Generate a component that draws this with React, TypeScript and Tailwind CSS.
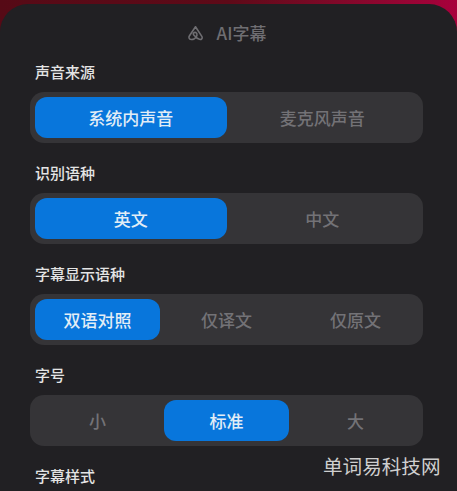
const font = { fontFamily: '"Noto Sans CJK SC", "Noto Sans", sans-serif' };

interface SegmentProps {
  label: string;
  options: string[];
  active: number;
}

function Segment({ label, options, active }: SegmentProps) {
  return (
    <div>
      <p className="mb-[9px] pl-[5px] text-[15px] leading-[22px] font-medium text-[#e4e4e4]">
        {label}
      </p>
      <div
        className={`flex h-[51px] items-center rounded-[14px] bg-[#353437] px-[5px] ${
          options.length === 3 ? "gap-[4px]" : ""
        }`}
      >
        {options.map((option, index) => (
          <div
            key={option}
            className={`flex h-[41px] flex-1 items-center justify-center rounded-[12px] text-[17px] font-medium ${
              index === active
                ? "bg-[#0876dc] text-[#e2edf6]"
                : "text-[#737276]"
            }`}
          >
            {option}
          </div>
        ))}
      </div>
    </div>
  );
}

export default function App() {
  return (
    <div
      className="relative h-[491px] w-[457px] overflow-hidden bg-gradient-to-r from-[#560a16] via-[#5e0a18] to-[#a8003c]"
      style={font}
    >
      <div className="mt-[4px] h-[487px] w-[457px] rounded-t-[28px] bg-[#212023] pr-[34px] pl-[30px]">
        <div className="flex h-[57px] items-center justify-center gap-[13px] text-[#6f6e72]">
          <svg
            width="17"
            height="16"
            viewBox="0 0 15 14"
            fill="none"
            stroke="currentColor"
            strokeWidth="1.4"
            strokeLinejoin="round"
          >
            <path d="M7.5 1.5 L13.2 10.2 C14 11.8 12.6 13 11 12.6 C9.2 12.2 7.4 10.6 5.8 8.6 C4.9 7.4 6.4 6 7.8 6.6 C9.4 7.4 9.2 10.6 6.6 12 C4.6 13 2.4 13 1.8 11.4 C1.5 10.6 1.8 10 2.2 9.4 Z" />
          </svg>
          <span className="text-[17px] font-medium">AI字幕</span>
        </div>
        <div className="flex flex-col gap-[19px]">
          <Segment label="声音来源" options={["系统内声音", "麦克风声音"]} active={0} />
          <Segment label="识别语种" options={["英文", "中文"]} active={0} />
          <Segment label="字幕显示语种" options={["双语对照", "仅译文", "仅原文"]} active={0} />
          <Segment label="字号" options={["小", "标准", "大"]} active={1} />
          <p className="pl-[5px] text-[15px] leading-[22px] font-medium text-[#e4e4e4]">字幕样式</p>
        </div>
      </div>
      <div className="absolute top-[454px] left-[323px] text-[19.6px] leading-[24px] text-[#cfcfcf]">
        单词易科技网
      </div>
    </div>
  );
}
